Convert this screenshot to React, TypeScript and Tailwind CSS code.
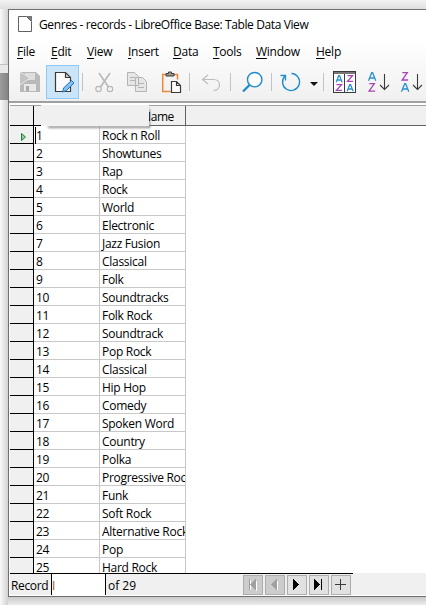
import React from "react";

const genres = [
  "Rock n Roll", "Showtunes", "Rap", "Rock", "World", "Electronic", "Jazz Fusion", "Classical", "Folk",
  "Soundtracks", "Folk Rock", "Soundtrack", "Pop Rock", "Classical", "Hip Hop", "Comedy", "Spoken Word",
  "Country", "Polka", "Progressive Rock", "Funk", "Soft Rock", "Alternative Rock", "Pop", "Hard Rock",
];

const menus = [
  { label: "File", cls: "w-[34px]" },
  { label: "Edit", cls: "w-[36px]" },
  { label: "View", cls: "w-[41px]" },
  { label: "Insert", cls: "w-[45px]" },
  { label: "Data", cls: "w-[40px]" },
  { label: "Tools", cls: "w-[43px]" },
  { label: "Window", cls: "w-[60px]" },
  { label: "Help", cls: "w-[40px]" },
];

function Toolbar() {
  return (
    <svg className="block h-9 w-[417px] shrink-0" viewBox="9 65 417 36" fill="none">
      <g shapeRendering="crispEdges">
        <rect x="46.5" y="65.5" width="32" height="33" fill="#cce4f7" stroke="#90c8f6" />
        <path d="M82.5 73v18M189.5 73v18M230.5 73v18M271.5 73v18M323.5 73v18" stroke="#c3c3c3" />
      </g>
      <path d="M20 72h16l4 4v16H20z" fill="#b9b9b9" />
      <path d="M25 73h10v7H25z" fill="#dedede" />
      <path d="M24 84h12v7H24z" fill="#e8e8e8" />
      <path d="M26 86h3v5h-3z" fill="#aaa" />
      <path d="M20 72l10 6-10 7" fill="#c4c4c4" stroke="#e6e6e6" />
      <path d="M55.5 72.5h10l5 5v14h-15zM65.5 72.5v5h5" fill="#fafafa" stroke="#3a3a38" strokeWidth="1.2" />
      <path d="M62.5 92l1.2-4.200 7.800-7.300 2.500 2.500-7.600 7.600z" fill="#83beec" stroke="#1e74bd" />
      <path d="M99 73l9.500 14M110 73l-9.500 14" stroke="#b8b8b8" strokeWidth="1.600" />
      <circle cx="98.500" cy="89" r="2.700" stroke="#b8b8b8" strokeWidth="1.200" />
      <circle cx="110" cy="89" r="2.700" stroke="#b8b8b8" strokeWidth="1.200" />
      <path d="M127.500 72.500h7l4 4v9h-11zM135.500 77.500h7l4 4v10h-11z" fill="#e6e6e6" stroke="#b4b4b4" />
      <path d="M130 77.500h5m-5 3h5M138 83.500h6m-6 4h6" stroke="#b4b4b4" />
      <path d="M166 74.500h-3.300v17h8M174 74.500h3.500v5" stroke="#ed8733" strokeWidth="1.500" />
      <path d="M166 76v-2.500h2.500v-1.500h3v1.500h2.500v2.500z" stroke="#3a3a38" fill="#999" />
      <path d="M171.500 81.500h5l4 4v7h-9zM176.500 81.500v4h4" fill="#fff" stroke="#3a3a38" strokeWidth="1.200" />
      <path d="M208 75l-5.500 4.500 5.500 4.500M203 79.500h10.500c8 0 8 11 0 11" stroke="#bdbdbd" strokeWidth="1.200" />
      <circle cx="254.700" cy="79.700" r="7.200" fill="#fff" stroke="#1e8bcd" strokeWidth="1.400" />
      <path d="M249.500 85l-6.500 6.500" stroke="#1e8bcd" strokeWidth="2.300" />
      <path d="M291.500 73.500a8.500 8.500 0 1 1-6.500 2.500M280.500 75.500h5v5" stroke="#1e8bcd" strokeWidth="1.300" />
      <path d="M310 82h8l-4 4z" fill="#111" />
      <g shapeRendering="crispEdges">
        <path d="M333.500 71.500h22v21h-22z" fill="#fff" stroke="#3a3a38" />
        <path d="M344.500 74v18" stroke="#3a3a38" />
        <path d="M334 73h21" stroke="#797774" strokeWidth="2" />
      </g>
      <g stroke="#2b91cf" strokeWidth="1.300">
        <path d="M336.200 82.200l2.500-6.500h.900l2.500 6.500m-5-2.200h4.200M347.200 91.200l2.500-6.500h.900l2.500 6.500m-5-2.200h4.200" />
        <path d="M368.500 80.700l3.200-8h.900l3.200 8m-6.200-2.700h5.200M401.500 91.700l3.200-8h.900l3.200 8m-6.200-2.700h5.200" />
      </g>
      <g stroke="#a845b2" strokeWidth="1.300">
        <path d="M347.500 75.700h5l-5 5.600h5.500M336.500 84.700h5l-5 5.600h5.500" />
        <path d="M369.300 83.700h5l-5.200 7.500h6M402.300 72.700h5l-5.200 7.300h6" />
      </g>
      <path d="M384.500 74v15m-4.500-4l4.500 4.500 4.500-4.500M417.500 74v15m-4.500-4l4.500 4.500 4.500-4.500" stroke="#3a3a38" strokeWidth="1.100" />
    </svg>
  );
}

function NavButton({ kind, disabled }: { kind: "first" | "prev" | "next" | "last" | "new"; disabled?: boolean }) {
  return (
    <div className={`flex h-5 w-5 items-center justify-center border border-[#adadad] ${disabled ? "bg-[#cccccc]" : "bg-[#e1e1e1]"}`}>
      <svg className="h-[18px] w-[18px]" viewBox="0 0 18 18" shapeRendering="crispEdges" fill={disabled ? "#a0a0a0" : "#000"}>
        {kind === "first" && <><path d="M6 4h1v10H6zM13 4v11l-6-5z" fill="#fff" /><path d="M5 3h1v11H5zM12 3v11L6 8.500z" /></>}
        {kind === "prev" && <><path d="M12 4v11l-5-5z" fill="#fff" /><path d="M11 3v11L5 8.500z" /></>}
        {kind === "next" && <path d="M5 3v11l6-5.500z" />}
        {kind === "last" && <><path d="M4 3v11l6-5.500z" /><path d="M11 3h1v11h-1z" /></>}
        {kind === "new" && <path d="M3 8h11v1H3zM8 3h1v11H8z" fill="#3a3a38" />}
      </svg>
    </div>
  );
}

export default function App() {
  return (
    <div className="relative h-[605px] w-[426px] overflow-hidden bg-[#eeeeee] pl-2 pt-[9px] font-['Open_Sans','Noto_Sans',sans-serif] text-[12px] text-black">
      <div className="absolute inset-y-0 left-0 w-2 bg-linear-to-r from-[#fafafa] to-[#d2d2d2]" />
      <div className="absolute left-0 top-16 h-[9px] w-2 border-t border-[#c0c0c0] bg-[#e8e8e8]" />
      <div className="absolute left-0 top-[73px] h-[27px] w-2 bg-linear-to-r from-[#9c9c9c] to-[#858585]" />
      <div className="absolute left-0 top-0 h-[9px] w-full bg-linear-to-b from-[#f4f4f4] to-[#dedede]" />
      <div className="absolute bottom-0 left-2 h-[9px] w-full bg-linear-to-b from-[#c6c6c6] to-[#ececec]" />
      <div className="relative flex h-[588px] w-[418px] flex-col overflow-hidden border-b border-l border-t border-[#707070] bg-white">
        <div className="flex h-[31px] shrink-0 items-center">
          <svg className="-mt-[3px] ml-[9px] h-4 w-[14px]" viewBox="0 0 14 16" fill="none">
            <path d="M8.500.500h-8v15h13V6" stroke="#606060" /><path d="M8 0h6v6z" fill="#777" /><path d="M8.500.500l5 5" stroke="#606060" />
          </svg>
          <span className="-mt-0.5 ml-[7px] whitespace-nowrap tracking-[-0.39px]">Genres - records - LibreOffice Base: Table Data View</span>
        </div>
        <div className="flex h-16 shrink-0 flex-col bg-linear-to-b from-white to-[#efefef]">
          <div className="flex h-6 items-center pb-[2px] pl-2">
            {menus.map((m) => (
              <span key={m.label} className={`shrink-0 whitespace-nowrap tracking-[-0.25px] ${m.cls}`}>
                <span className="underline underline-offset-2">{m.label[0]}</span>{m.label.slice(1)}
              </span>
            ))}
          </div>
          <Toolbar />
          <div className="h-[2px] shrink-0 bg-[#a0a0a0]" />
          <div className="h-[2px] shrink-0 bg-white" />
        </div>
        <div className="relative z-10 ml-px flex h-[21px] shrink-0 border-b border-[#606060] border-t border-t-[#a0a0a0] bg-[#f0f0f0]">
          <div className="-mb-px w-6 shrink-0 border-b border-r border-black" />
          <div className="relative w-[152px] border-r border-[#606060]">
            <div className="absolute left-[14px] top-5 h-[2px] w-[102px] bg-[#888] blur-[1px]" />
            <div className="absolute left-[114px] top-[3px] h-[18px] w-[2px] bg-[#888] blur-[1px]" />
            <span className="absolute left-[108px] top-[1px] leading-[19px] tracking-[-0.4px]">Name</span>
            <div className="absolute left-0 top-[19px] h-px w-[7px] bg-black" />
            <div className="absolute -top-px left-[7px] h-[21px] w-[108px] bg-[#f0f0f0]" />
            <div className="absolute left-0 top-0 h-[19px] w-[10px] bg-[#f0f0f0]" />
          </div>
        </div>
        <div className="ml-px h-[447px] shrink-0 overflow-hidden">
          {genres.map((name, i) => (
            <div key={i} className="flex h-[18px]">
              <div className="flex w-6 items-center border-b border-r border-black bg-[#f0f0f0]">
                {i === 0 && <svg className="ml-[11px] mt-1 h-2 w-[5px]" viewBox="0 0 5 8"><path d="M.5.500v7l4-3.500z" fill="#9bc9a5" stroke="#188038" /></svg>}
              </div>
              <div className={`w-[66px] border-b border-r border-[#c8c8c8] leading-[19px] tracking-[-0.3px] ${i === 0 ? "pl-px" : "pl-[2px]"}`}>
                <span className={i === 0 ? "border-l border-black" : ""}>{i + 1}</span>
              </div>
              <div className="w-[86px] overflow-hidden whitespace-nowrap border-b border-r border-[#c8c8c8] pl-[2px] leading-[19px] tracking-[-0.28px]">{name}</div>
            </div>
          ))}
        </div>
        <div className="ml-px flex h-[22px] shrink-0 bg-[#f0f0f0]">
          <div className="flex w-[343px] border-t border-black">
            <span className="w-[41px] pl-px leading-[23px] tracking-[-0.35px]">Record</span>
            <div className="w-[55px] border-x border-black bg-white leading-[23px] text-[#a34e12]">I</div>
            <span className="w-[137px] pl-[2px] leading-[23px]">of 29</span>
            <div className="flex gap-[2px] pt-px">
              <NavButton kind="first" disabled /><NavButton kind="prev" disabled />
              <NavButton kind="next" /><NavButton kind="last" /><NavButton kind="new" />
            </div>
          </div>
        </div>
      </div>
    </div>
  );
}
